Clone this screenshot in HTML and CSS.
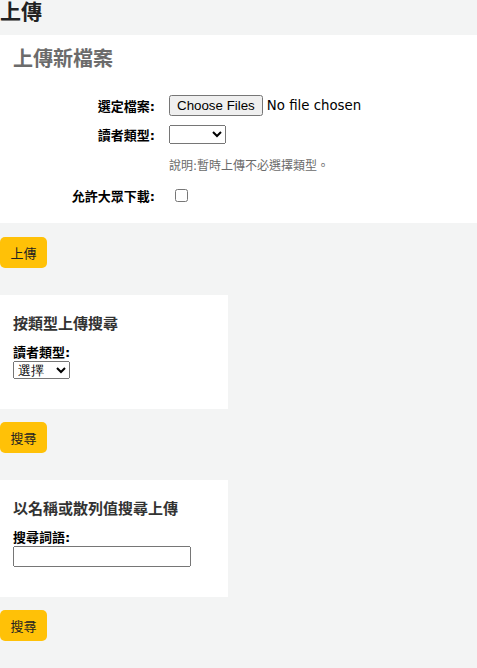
FILE: index.html
```html
<!DOCTYPE html>
<html lang="zh-Hant">
<head>
<meta charset="utf-8">
<title>上傳</title>
<link rel="stylesheet" href="styles.css">
</head>
<body>
<h1 class="page-title">上傳</h1>
<form class="upload-form">
  <fieldset class="panel">
    <legend class="panel-legend">上傳新檔案</legend>
    <ol class="rows">
      <li class="row row-file">
        <label class="row-label">選定檔案:</label>
        <input type="file" class="file-input" multiple>
      </li>
      <li class="row row-select">
        <label class="row-label">讀者類型:</label>
        <select class="select-empty"><option></option></select>
      </li>
      <li class="row row-hint">
        <span class="row-label"></span>
        <span class="hint">說明:暫時上傳不必選擇類型。</span>
      </li>
      <li class="row row-check">
        <label class="row-label">允許大眾下載:</label>
        <input type="checkbox" class="check">
      </li>
    </ol>
  </fieldset>
  <div class="actions"><button type="button" class="btn">上傳</button></div>
</form>

<form class="brief-form">
  <fieldset class="brief">
    <h3 class="brief-title">按類型上傳搜尋</h3>
    <label class="brief-label">讀者類型:</label>
    <select class="select-choose"><option>選擇</option></select>
  </fieldset>
  <div class="actions"><button type="button" class="btn">搜尋</button></div>
</form>

<form class="brief-form">
  <fieldset class="brief">
    <h3 class="brief-title">以名稱或散列值搜尋上傳</h3>
    <label class="brief-label">搜尋詞語:</label>
    <input type="text" class="term-input">
  </fieldset>
  <div class="actions"><button type="button" class="btn">搜尋</button></div>
</form>
</body>
</html>
```

FILE: styles.css
```css
html, body {
  margin: 0;
  padding: 0;
}
body {
  background: #f3f4f4;
  font-family: "DejaVu Sans", "Noto Sans CJK TC", sans-serif;
  font-size: 13px;
  color: #000;
}
.page-title {
  margin: 0 0 11px 0;
  font-size: 21px;
  line-height: 24px;
  font-weight: bold;
  color: #222;
}
.upload-form, .brief-form {
  margin: 0;
}
.panel {
  margin: 0;
  border: 0;
  background: #fff;
  padding: 12px 0 17px 0;
  display: block;
}
.panel-legend {
  float: left;
  width: 100%;
  padding: 0 0 0 13px;
  margin: 0;
  font-size: 20px;
  line-height: 24px;
  font-weight: bold;
  color: #6b6b6b;
}
.rows {
  clear: both;
  list-style: none;
  margin: 0;
  padding: 23px 0 0 0;
}
.row {
  display: flex;
  align-items: center;
}
.row-label {
  width: 155px;
  flex: none;
  text-align: right;
  font-weight: bold;
  margin-right: 14px;
  font-size: 13px;
}
.row-file { height: 23px; }
.row-select { height: 22px; margin-top: 6px; }
.row-hint { height: 16px; margin-top: 11px; }
.row-check { height: 21px; margin-top: 13px; }
.file-input {
  font-family: "DejaVu Sans", sans-serif;
  font-size: 13.333px;
  margin: 0;
}
.select-empty {
  width: 57px;
  height: 19px;
  margin: 0;
  font-size: 13px;
}
.hint {
  font-size: 12px;
  color: #6b6b6b;
}
.check {
  margin: 0 0 0 6px;
  width: 13px;
  height: 13px;
}
.actions {
  padding: 14px 0 27px 0;
}
.btn {
  background: #ffc107;
  border: 0;
  border-radius: 5px;
  height: 31px;
  width: 47px;
  padding: 0;
  font-family: "DejaVu Sans", "Noto Sans CJK TC", sans-serif;
  font-size: 13px;
  color: #222;
}
.brief {
  margin: 0;
  border: 0;
  background: #fff;
  width: 228px;
  box-sizing: border-box;
  padding: 20px 13px 30px 13px;
}
.brief-title {
  margin: 0 0 12px 0;
  font-size: 15px;
  line-height: 18px;
  font-weight: bold;
  color: #333;
}
.brief-label {
  display: block;
  font-weight: bold;
  font-size: 13px;
  line-height: 16px;
}
.select-choose {
  width: 57px;
  height: 18px;
  margin: 0;
  font-size: 13px;
}
.term-input {
  width: 178px;
  height: 21px;
  box-sizing: border-box;
  margin: 0;
  display: block;
}
.brief-form .actions {
  padding-top: 13px;
}
```
